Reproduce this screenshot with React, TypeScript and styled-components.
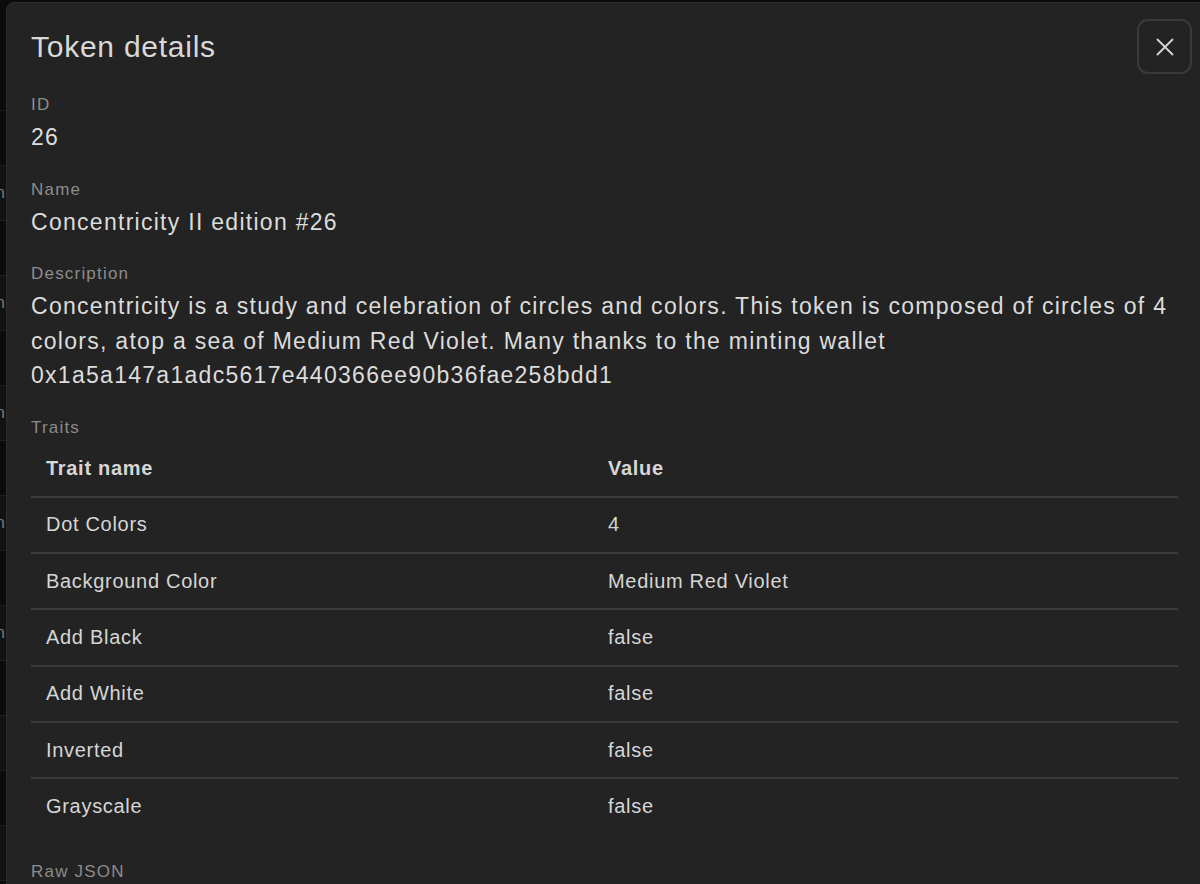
import styled, { createGlobalStyle } from 'styled-components'

const GlobalStyle = createGlobalStyle`
  html, body {
    margin: 0;
    padding: 0;
    background: #0b0b0b;
    font-family: 'Liberation Sans', Arial, sans-serif;
    overflow: hidden;
  }
`

const traits = [
  { name: 'Dot Colors', value: '4' },
  { name: 'Background Color', value: 'Medium Red Violet' },
  { name: 'Add Black', value: 'false' },
  { name: 'Add White', value: 'false' },
  { name: 'Inverted', value: 'false' },
  { name: 'Grayscale', value: 'false' },
]

const backdropRows = ['', 'Token', '', 'Token', '', 'Token', '', 'Token', '', 'Token', '', '', '', '', '']

export default function App() {
  return (
    <>
      <GlobalStyle />
      <Page>
        <PageHeader />
        {backdropRows.map((t, i) => (
          <BackRow key={i} $alt={i % 2 === 1}>
            <BackCell>{t}</BackCell>
          </BackRow>
        ))}
      </Page>
      <Modal>
        <Header>
          <Title>Token details</Title>
          <CloseButton aria-label="Close">
            <svg width="20" height="20" viewBox="0 0 20 20" fill="none">
              <path d="M2.5 2.5L17.5 17.5M17.5 2.5L2.5 17.5" stroke="#d6d6d6" strokeWidth="1.8" strokeLinecap="round" />
            </svg>
          </CloseButton>
        </Header>
        <Field>
          <Label>ID</Label>
          <Value>26</Value>
        </Field>
        <Field>
          <Label>Name</Label>
          <Value>Concentricity II edition #26</Value>
        </Field>
        <Field>
          <Label>Description</Label>
          <Value>
            Concentricity is a study and celebration of circles and colors. This token is composed of circles of 4
            colors, atop a sea of Medium Red Violet. Many thanks to the minting wallet
            0x1a5a147a1adc5617e440366ee90b36fae258bdd1
          </Value>
        </Field>
        <Field>
          <Label>Traits</Label>
          <Table>
            <thead>
              <tr>
                <Th>Trait name</Th>
                <Th>Value</Th>
              </tr>
            </thead>
            <tbody>
              {traits.map((t) => (
                <tr key={t.name}>
                  <Td>{t.name}</Td>
                  <Td>{t.value}</Td>
                </tr>
              ))}
            </tbody>
          </Table>
        </Field>
        <Field>
          <Label>Raw JSON</Label>
        </Field>
      </Modal>
    </>
  )
}

const Page = styled.div`
  height: 884px;
  background: #0b0b0b;
`

const PageHeader = styled.div`
  height: 110px;
  border-bottom: 1px solid #1c1c1c;
`

const BackRow = styled.div<{ $alt: boolean }>`
  height: 54px;
  border-bottom: 1px solid #1e1e1e;
  background: ${(p) => (p.$alt ? '#121212' : '#0b0b0b')};
  display: flex;
  align-items: center;
`

const BackCell = styled.div`
  width: 5px;
  overflow: hidden;
  direction: rtl;
  color: #777;
  font-size: 17px;
  white-space: nowrap;
`

const Modal = styled.div`
  position: fixed;
  left: 6px;
  top: 2px;
  right: -20px;
  bottom: -40px;
  background: #232323;
  border-radius: 8px 0 0 0;
  border: 1px solid #2c2c2c;
  padding: 14px 41px 0 24px;
  color: #dadada;
  box-sizing: border-box;
  display: flex;
  flex-direction: column;
  gap: 24px;
`

const Header = styled.div`
  display: flex;
  align-items: center;
  justify-content: space-between;
  margin-top: 2px;
  margin-right: -14px;
  margin-bottom: -4px;
`

const Title = styled.h2`
  margin: 0;
  font-size: 30px;
  font-weight: 400;
  color: #d8d8d8;
  letter-spacing: 0.75px;
`

const CloseButton = styled.button`
  width: 55px;
  height: 55px;
  border: 2px solid #3a3a3a;
  border-radius: 11px;
  background: transparent;
  display: flex;
  align-items: center;
  justify-content: center;
  padding: 0;
`

const Field = styled.div`
  display: flex;
  flex-direction: column;
  gap: 4px;
`

const Label = styled.div`
  font-size: 17px;
  line-height: 22px;
  color: #8c8c8c;
  letter-spacing: 1.2px;
`

const Value = styled.div`
  font-size: 23px;
  line-height: 34.5px;
  color: #dcdcdc;
  letter-spacing: 1.28px;
`

const Table = styled.table`
  width: 100%;
  border-collapse: collapse;
  margin-top: -1px;
  margin-bottom: 3px;
`

const Th = styled.th`
  text-align: left;
  font-size: 20px;
  font-weight: 700;
  color: #d6d6d6;
  letter-spacing: 0.7px;
  padding: 0 15px;
  height: 54.3px;
  border-bottom: 2px solid #3c3c3c;
  &:first-child {
    width: 532px;
  }
`

const Td = styled.td`
  font-size: 20px;
  color: #d6d6d6;
  letter-spacing: 0.7px;
  padding: 0 15px;
  height: 54.3px;
  border-bottom: 2px solid #3c3c3c;
  tr:last-child & {
    border-bottom: none;
  }
`
